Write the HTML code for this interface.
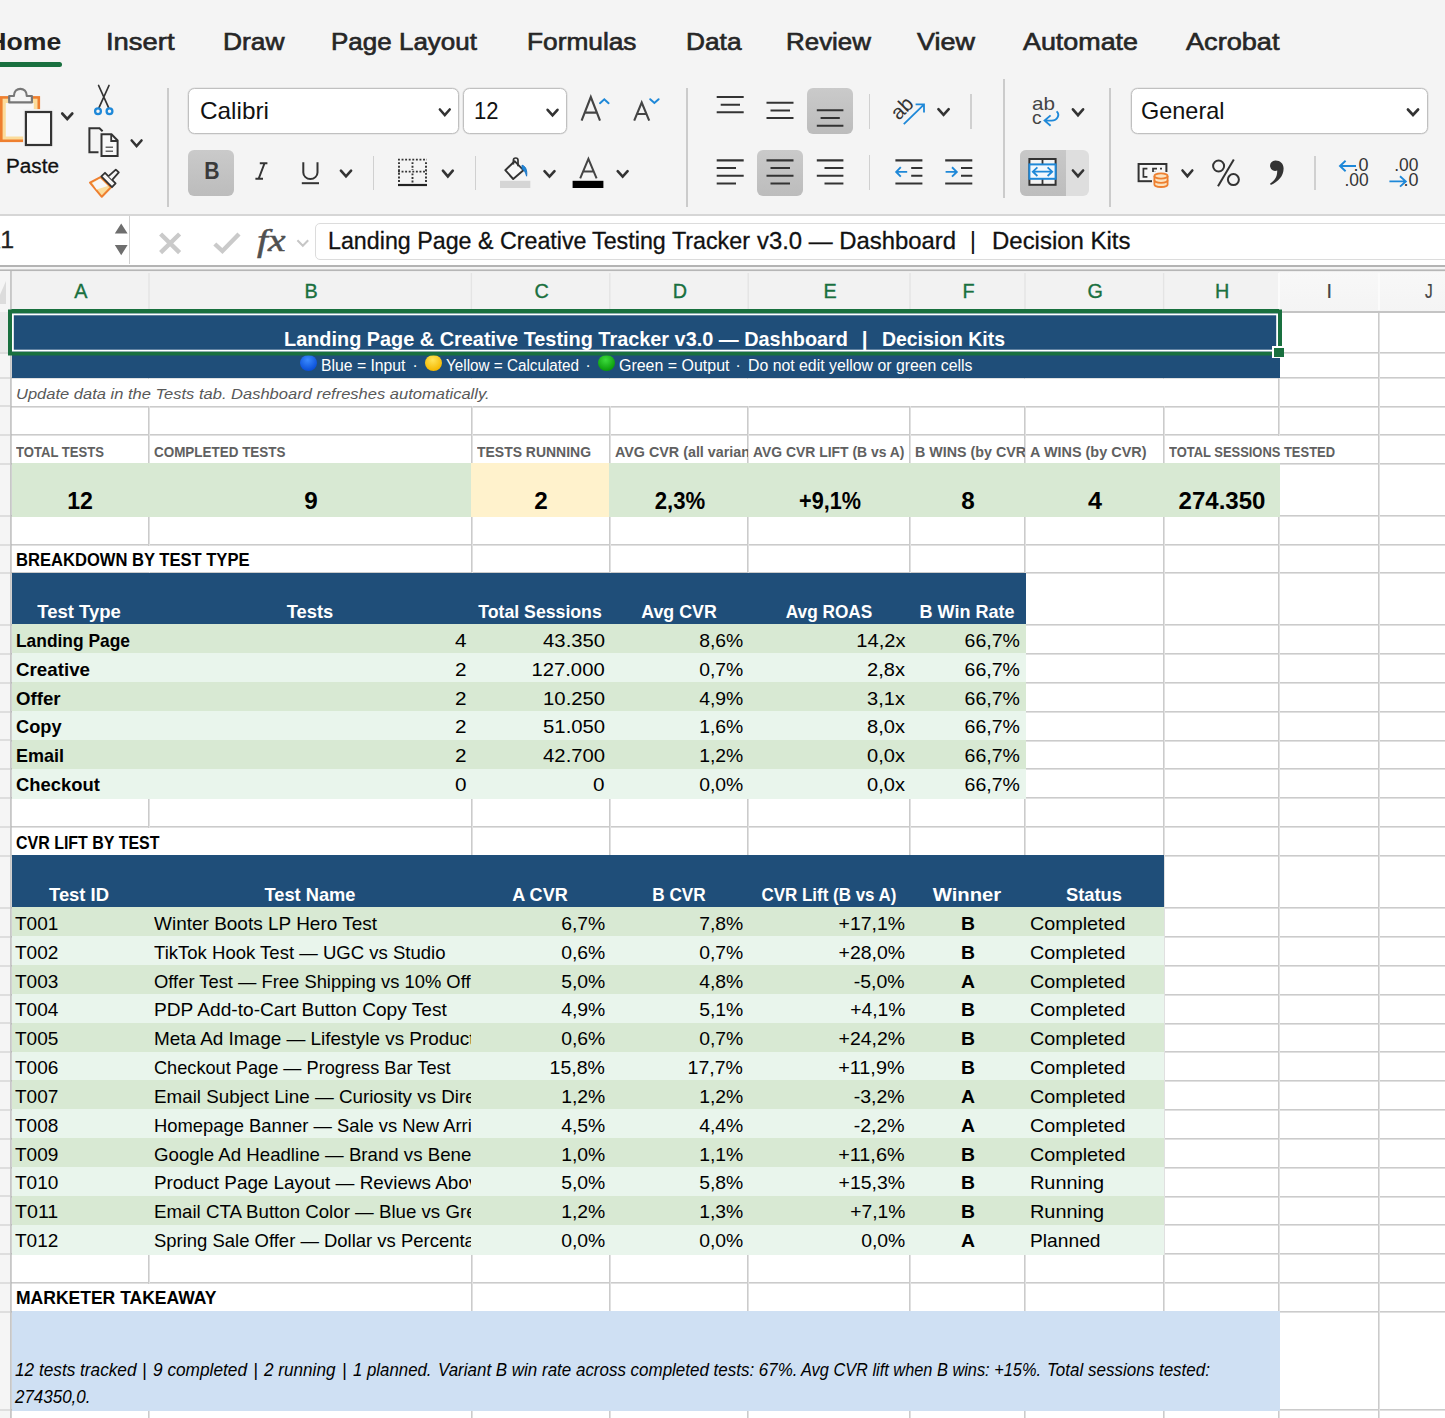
<!DOCTYPE html>
<html><head><meta charset="utf-8"><title>Excel</title><style>
html,body{margin:0;padding:0;}
body{width:1445px;height:1418px;overflow:hidden;background:#f4f4f4;position:relative;
font-family:"Liberation Sans",sans-serif;}
#root{position:absolute;left:0;top:0;width:1445px;height:1418px;overflow:hidden;}
#root div,#root svg{position:absolute;}
.t{position:absolute;white-space:pre;line-height:1;display:block;}
</style></head>
<body><div id="root">
<div id="sheet" style="left:0;top:271px;width:1445px;height:1147px;background:#fff"></div>
<div style="left:10.50px;top:352.00px;width:1434.50px;height:2.00px;background:linear-gradient(#cbcbcb 50%,#e0e0e0 50%);"></div>
<div style="left:10.50px;top:377.00px;width:1434.50px;height:2.00px;background:linear-gradient(#cbcbcb 50%,#e0e0e0 50%);"></div>
<div style="left:10.50px;top:406.00px;width:1434.50px;height:2.00px;background:linear-gradient(#cbcbcb 50%,#e0e0e0 50%);"></div>
<div style="left:10.50px;top:434.00px;width:1434.50px;height:2.00px;background:linear-gradient(#cbcbcb 50%,#e0e0e0 50%);"></div>
<div style="left:10.50px;top:463.00px;width:1434.50px;height:2.00px;background:linear-gradient(#cbcbcb 50%,#e0e0e0 50%);"></div>
<div style="left:10.50px;top:515.00px;width:1434.50px;height:2.00px;background:linear-gradient(#cbcbcb 50%,#e0e0e0 50%);"></div>
<div style="left:10.50px;top:544.00px;width:1434.50px;height:2.00px;background:linear-gradient(#cbcbcb 50%,#e0e0e0 50%);"></div>
<div style="left:10.50px;top:572.00px;width:1434.50px;height:2.00px;background:linear-gradient(#cbcbcb 50%,#e0e0e0 50%);"></div>
<div style="left:10.50px;top:624.00px;width:1434.50px;height:2.00px;background:linear-gradient(#cbcbcb 50%,#e0e0e0 50%);"></div>
<div style="left:10.50px;top:653.00px;width:1434.50px;height:2.00px;background:linear-gradient(#cbcbcb 50%,#e0e0e0 50%);"></div>
<div style="left:10.50px;top:682.00px;width:1434.50px;height:2.00px;background:linear-gradient(#cbcbcb 50%,#e0e0e0 50%);"></div>
<div style="left:10.50px;top:711.00px;width:1434.50px;height:2.00px;background:linear-gradient(#cbcbcb 50%,#e0e0e0 50%);"></div>
<div style="left:10.50px;top:740.00px;width:1434.50px;height:2.00px;background:linear-gradient(#cbcbcb 50%,#e0e0e0 50%);"></div>
<div style="left:10.50px;top:768.00px;width:1434.50px;height:2.00px;background:linear-gradient(#cbcbcb 50%,#e0e0e0 50%);"></div>
<div style="left:10.50px;top:797.00px;width:1434.50px;height:2.00px;background:linear-gradient(#cbcbcb 50%,#e0e0e0 50%);"></div>
<div style="left:10.50px;top:826.00px;width:1434.50px;height:2.00px;background:linear-gradient(#cbcbcb 50%,#e0e0e0 50%);"></div>
<div style="left:10.50px;top:855.00px;width:1434.50px;height:2.00px;background:linear-gradient(#cbcbcb 50%,#e0e0e0 50%);"></div>
<div style="left:10.50px;top:907.00px;width:1434.50px;height:2.00px;background:linear-gradient(#cbcbcb 50%,#e0e0e0 50%);"></div>
<div style="left:10.50px;top:936.00px;width:1434.50px;height:2.00px;background:linear-gradient(#cbcbcb 50%,#e0e0e0 50%);"></div>
<div style="left:10.50px;top:965.00px;width:1434.50px;height:2.00px;background:linear-gradient(#cbcbcb 50%,#e0e0e0 50%);"></div>
<div style="left:10.50px;top:994.00px;width:1434.50px;height:2.00px;background:linear-gradient(#cbcbcb 50%,#e0e0e0 50%);"></div>
<div style="left:10.50px;top:1023.00px;width:1434.50px;height:2.00px;background:linear-gradient(#cbcbcb 50%,#e0e0e0 50%);"></div>
<div style="left:10.50px;top:1051.00px;width:1434.50px;height:2.00px;background:linear-gradient(#cbcbcb 50%,#e0e0e0 50%);"></div>
<div style="left:10.50px;top:1080.00px;width:1434.50px;height:2.00px;background:linear-gradient(#cbcbcb 50%,#e0e0e0 50%);"></div>
<div style="left:10.50px;top:1109.00px;width:1434.50px;height:2.00px;background:linear-gradient(#cbcbcb 50%,#e0e0e0 50%);"></div>
<div style="left:10.50px;top:1138.00px;width:1434.50px;height:2.00px;background:linear-gradient(#cbcbcb 50%,#e0e0e0 50%);"></div>
<div style="left:10.50px;top:1167.00px;width:1434.50px;height:2.00px;background:linear-gradient(#cbcbcb 50%,#e0e0e0 50%);"></div>
<div style="left:10.50px;top:1196.00px;width:1434.50px;height:2.00px;background:linear-gradient(#cbcbcb 50%,#e0e0e0 50%);"></div>
<div style="left:10.50px;top:1224.00px;width:1434.50px;height:2.00px;background:linear-gradient(#cbcbcb 50%,#e0e0e0 50%);"></div>
<div style="left:10.50px;top:1253.00px;width:1434.50px;height:2.00px;background:linear-gradient(#cbcbcb 50%,#e0e0e0 50%);"></div>
<div style="left:10.50px;top:1282.00px;width:1434.50px;height:2.00px;background:linear-gradient(#cbcbcb 50%,#e0e0e0 50%);"></div>
<div style="left:10.50px;top:1311.00px;width:1434.50px;height:2.00px;background:linear-gradient(#cbcbcb 50%,#e0e0e0 50%);"></div>
<div style="left:10.50px;top:1409.00px;width:1434.50px;height:2.00px;background:linear-gradient(#cbcbcb 50%,#e0e0e0 50%);"></div>
<div style="left:10.50px;top:1439.00px;width:1434.50px;height:2.00px;background:linear-gradient(#cbcbcb 50%,#e0e0e0 50%);"></div>
<div style="left:148.00px;top:311.50px;width:2.00px;height:1106.50px;background:linear-gradient(90deg,#cbcbcb 50%,#e0e0e0 50%);"></div>
<div style="left:471.00px;top:311.50px;width:2.00px;height:1106.50px;background:linear-gradient(90deg,#cbcbcb 50%,#e0e0e0 50%);"></div>
<div style="left:609.00px;top:311.50px;width:2.00px;height:1106.50px;background:linear-gradient(90deg,#cbcbcb 50%,#e0e0e0 50%);"></div>
<div style="left:747.00px;top:311.50px;width:2.00px;height:1106.50px;background:linear-gradient(90deg,#cbcbcb 50%,#e0e0e0 50%);"></div>
<div style="left:909.00px;top:311.50px;width:2.00px;height:1106.50px;background:linear-gradient(90deg,#cbcbcb 50%,#e0e0e0 50%);"></div>
<div style="left:1024.00px;top:311.50px;width:2.00px;height:1106.50px;background:linear-gradient(90deg,#cbcbcb 50%,#e0e0e0 50%);"></div>
<div style="left:1163.00px;top:311.50px;width:2.00px;height:1106.50px;background:linear-gradient(90deg,#cbcbcb 50%,#e0e0e0 50%);"></div>
<div style="left:1278.00px;top:311.50px;width:2.00px;height:1106.50px;background:linear-gradient(90deg,#cbcbcb 50%,#e0e0e0 50%);"></div>
<div style="left:1378.00px;top:311.50px;width:2.00px;height:1106.50px;background:linear-gradient(90deg,#cbcbcb 50%,#e0e0e0 50%);"></div>
<div style="left:12.00px;top:379.00px;width:1266.00px;height:27.00px;background:#fff;"></div>
<div style="left:12.00px;top:546.00px;width:459.00px;height:26.00px;background:#fff;"></div>
<div style="left:12.00px;top:828.00px;width:459.00px;height:27.00px;background:#fff;"></div>
<div style="left:12.00px;top:1284.00px;width:459.00px;height:27.00px;background:#fff;"></div>
<div style="left:1165.00px;top:436.00px;width:213.00px;height:27.00px;background:#fff;"></div>
<div style="left:11.60px;top:310.80px;width:1268.40px;height:66.90px;background:#1f4e79;"></div>
<div style="left:11.60px;top:462.80px;width:459.00px;height:53.90px;background:#d8e9d3;"></div>
<div style="left:470.60px;top:462.80px;width:138.80px;height:53.90px;background:#fff2cc;"></div>
<div style="left:609.40px;top:462.80px;width:670.60px;height:53.90px;background:#d8e9d3;"></div>
<div style="left:11.60px;top:572.60px;width:1014.40px;height:53.10px;background:#1f4e79;"></div>
<div style="left:11.60px;top:624.30px;width:1014.40px;height:30.25px;background:#d8e9d3;"></div>
<div style="left:11.60px;top:653.15px;width:1014.40px;height:30.25px;background:#e9f5ec;"></div>
<div style="left:11.60px;top:682.00px;width:1014.40px;height:30.25px;background:#d8e9d3;"></div>
<div style="left:11.60px;top:710.85px;width:1014.40px;height:30.25px;background:#e9f5ec;"></div>
<div style="left:11.60px;top:739.70px;width:1014.40px;height:30.25px;background:#d8e9d3;"></div>
<div style="left:11.60px;top:768.55px;width:1014.40px;height:30.25px;background:#e9f5ec;"></div>
<div style="left:11.60px;top:855.30px;width:1152.80px;height:53.40px;background:#1f4e79;"></div>
<div style="left:11.60px;top:907.30px;width:1152.80px;height:30.24px;background:#d8e9d3;"></div>
<div style="left:11.60px;top:936.14px;width:1152.80px;height:30.24px;background:#e9f5ec;"></div>
<div style="left:11.60px;top:964.98px;width:1152.80px;height:30.24px;background:#d8e9d3;"></div>
<div style="left:11.60px;top:993.82px;width:1152.80px;height:30.24px;background:#e9f5ec;"></div>
<div style="left:11.60px;top:1022.66px;width:1152.80px;height:30.24px;background:#d8e9d3;"></div>
<div style="left:11.60px;top:1051.50px;width:1152.80px;height:30.24px;background:#e9f5ec;"></div>
<div style="left:11.60px;top:1080.34px;width:1152.80px;height:30.24px;background:#d8e9d3;"></div>
<div style="left:11.60px;top:1109.18px;width:1152.80px;height:30.24px;background:#e9f5ec;"></div>
<div style="left:11.60px;top:1138.02px;width:1152.80px;height:30.24px;background:#d8e9d3;"></div>
<div style="left:11.60px;top:1166.86px;width:1152.80px;height:30.24px;background:#e9f5ec;"></div>
<div style="left:11.60px;top:1195.70px;width:1152.80px;height:30.24px;background:#d8e9d3;"></div>
<div style="left:11.60px;top:1224.54px;width:1152.80px;height:30.24px;background:#e9f5ec;"></div>
<div style="left:11.60px;top:1310.90px;width:1268.40px;height:99.80px;background:#cfe0f3;"></div>
<span class="t" id="t1" style="top:328.69px;font-size:20.8px;color:#fff;font-weight:bold;left:283.80px;transform-origin:0 0;transform:scaleX(0.9556);">Landing Page &amp; Creative Testing Tracker v3.0 — Dashboard</span>
<span class="t" style="top:328.69px;font-size:20.8px;color:#fff;font-weight:bold;left:-135.40px;width:2000px;text-align:center;transform-origin:50% 0;"><span id="t2">|</span></span>
<span class="t" id="t3" style="top:328.69px;font-size:20.8px;color:#fff;font-weight:bold;left:882.20px;transform-origin:0 0;transform:scaleX(0.9336);">Decision Kits</span>
<div style="left:300px;top:354.8px;width:17px;height:15.8px;border-radius:50%;background:radial-gradient(circle at 45% 30%,#3b8bff,#0a4fd8 75%);"></div>
<div style="left:424.8px;top:354.8px;width:17px;height:15.8px;border-radius:50%;background:radial-gradient(circle at 45% 30%,#ffe55a,#f5b800 75%);"></div>
<div style="left:597.8px;top:354.8px;width:17px;height:15.8px;border-radius:50%;background:radial-gradient(circle at 45% 30%,#3ddc3d,#0a9a0a 75%);"></div>
<span class="t" id="t4" style="top:357.79px;font-size:15.6px;color:#fff;left:321.00px;transform-origin:0 0;transform:scaleX(1.0099);">Blue = Input</span>
<span class="t" id="t5" style="top:357.79px;font-size:15.6px;color:#fff;left:412.50px;transform-origin:0 0;">·</span>
<span class="t" id="t6" style="top:357.79px;font-size:15.6px;color:#fff;left:446.00px;transform-origin:0 0;transform:scaleX(0.9782);">Yellow = Calculated</span>
<span class="t" id="t7" style="top:357.79px;font-size:15.6px;color:#fff;left:585.50px;transform-origin:0 0;">·</span>
<span class="t" id="t8" style="top:357.79px;font-size:15.6px;color:#fff;left:619.00px;transform-origin:0 0;transform:scaleX(1.0237);">Green = Output</span>
<span class="t" id="t9" style="top:357.79px;font-size:15.6px;color:#fff;left:735.50px;transform-origin:0 0;">·</span>
<span class="t" id="t10" style="top:357.79px;font-size:15.6px;color:#fff;left:748.00px;transform-origin:0 0;transform:scaleX(1.0157);">Do not edit yellow or green cells</span>
<span class="t" id="t11" style="top:387.16px;font-size:14.7px;color:#595959;font-style:italic;left:15.50px;transform-origin:0 0;transform:scaleX(1.1240);">Update data in the Tests tab. Dashboard refreshes automatically.</span>
<span class="t" id="t12" style="top:444.76px;font-size:14.7px;color:#606060;font-weight:bold;left:15.70px;transform-origin:0 0;transform:scaleX(0.8911);">TOTAL TESTS</span>
<span class="t" id="t13" style="top:444.76px;font-size:14.7px;color:#606060;font-weight:bold;left:154.30px;transform-origin:0 0;transform:scaleX(0.9156);">COMPLETED TESTS</span>
<span class="t" id="t14" style="top:444.76px;font-size:14.7px;color:#606060;font-weight:bold;left:476.50px;transform-origin:0 0;transform:scaleX(0.9504);">TESTS RUNNING</span>
<div style="left:609.80px;top:0;width:137.90px;height:1418px;overflow:hidden;background:none"><div style="left:-609.80px;top:0;width:1445px;height:1418px;background:none"><span class="t" id="t15" style="top:444.76px;font-size:14.7px;color:#606060;font-weight:bold;left:615.00px;transform-origin:0 0;transform:scaleX(0.9748);">AVG CVR (all variants)</span></div></div>
<span class="t" id="t16" style="top:444.76px;font-size:14.7px;color:#606060;font-weight:bold;left:753.00px;transform-origin:0 0;transform:scaleX(0.9472);">AVG CVR LIFT (B vs A)</span>
<div style="left:910.00px;top:0;width:114.50px;height:1418px;overflow:hidden;background:none"><div style="left:-910.00px;top:0;width:1445px;height:1418px;background:none"><span class="t" id="t17" style="top:444.76px;font-size:14.7px;color:#606060;font-weight:bold;left:915.00px;transform-origin:0 0;transform:scaleX(0.9720);">B WINS (by CVR)</span></div></div>
<span class="t" id="t18" style="top:444.76px;font-size:14.7px;color:#606060;font-weight:bold;left:1030.30px;transform-origin:0 0;transform:scaleX(0.9823);">A WINS (by CVR)</span>
<span class="t" id="t19" style="top:444.76px;font-size:14.7px;color:#606060;font-weight:bold;left:1168.50px;transform-origin:0 0;transform:scaleX(0.8805);">TOTAL SESSIONS TESTED</span>
<span class="t" style="top:489.66px;font-size:23.2px;color:#000;font-weight:bold;left:-919.75px;width:2000px;text-align:center;transform-origin:50% 0;transform:scaleX(0.9962);"><span id="t20">12</span></span>
<span class="t" style="top:489.66px;font-size:23.2px;color:#000;font-weight:bold;left:-689.30px;width:2000px;text-align:center;transform-origin:50% 0;transform:scaleX(1.0460);"><span id="t21">9</span></span>
<span class="t" style="top:489.66px;font-size:23.2px;color:#000;font-weight:bold;left:-458.90px;width:2000px;text-align:center;transform-origin:50% 0;transform:scaleX(1.0460);"><span id="t22">2</span></span>
<span class="t" style="top:489.66px;font-size:23.2px;color:#000;font-weight:bold;left:-320.50px;width:2000px;text-align:center;transform-origin:50% 0;transform:scaleX(0.9554);"><span id="t23">2,3%</span></span>
<span class="t" style="top:489.66px;font-size:23.2px;color:#000;font-weight:bold;left:-170.40px;width:2000px;text-align:center;transform-origin:50% 0;transform:scaleX(0.9336);"><span id="t24">+9,1%</span></span>
<span class="t" style="top:489.66px;font-size:23.2px;color:#000;font-weight:bold;left:-32.00px;width:2000px;text-align:center;transform-origin:50% 0;transform:scaleX(1.0460);"><span id="t25">8</span></span>
<span class="t" style="top:489.66px;font-size:23.2px;color:#000;font-weight:bold;left:94.80px;width:2000px;text-align:center;transform-origin:50% 0;transform:scaleX(1.0847);"><span id="t26">4</span></span>
<span class="t" style="top:489.66px;font-size:23.2px;color:#000;font-weight:bold;left:221.70px;width:2000px;text-align:center;transform-origin:50% 0;transform:scaleX(1.0378);"><span id="t27">274.350</span></span>
<span class="t" id="t28" style="top:550.22px;font-size:19.0px;color:#000;font-weight:bold;left:15.70px;transform-origin:0 0;transform:scaleX(0.8720);">BREAKDOWN BY TEST TYPE</span>
<span class="t" style="top:601.92px;font-size:19.0px;color:#fff;font-weight:bold;left:-920.75px;width:2000px;text-align:center;transform-origin:50% 0;transform:scaleX(0.9723);"><span id="t29">Test Type</span></span>
<span class="t" style="top:601.92px;font-size:19.0px;color:#fff;font-weight:bold;left:-690.30px;width:2000px;text-align:center;transform-origin:50% 0;transform:scaleX(0.9640);"><span id="t30">Tests</span></span>
<span class="t" style="top:601.92px;font-size:19.0px;color:#fff;font-weight:bold;left:-459.90px;width:2000px;text-align:center;transform-origin:50% 0;transform:scaleX(0.9308);"><span id="t31">Total Sessions</span></span>
<span class="t" style="top:601.92px;font-size:19.0px;color:#fff;font-weight:bold;left:-321.50px;width:2000px;text-align:center;transform-origin:50% 0;transform:scaleX(0.9368);"><span id="t32">Avg CVR</span></span>
<span class="t" style="top:601.92px;font-size:19.0px;color:#fff;font-weight:bold;left:-171.40px;width:2000px;text-align:center;transform-origin:50% 0;transform:scaleX(0.9069);"><span id="t33">Avg ROAS</span></span>
<span class="t" style="top:601.92px;font-size:19.0px;color:#fff;font-weight:bold;left:-33.00px;width:2000px;text-align:center;transform-origin:50% 0;transform:scaleX(0.9488);"><span id="t34">B Win Rate</span></span>
<span class="t" id="t35" style="top:630.87px;font-size:19.0px;color:#000;font-weight:bold;left:15.50px;transform-origin:0 0;transform:scaleX(0.9151);">Landing Page</span>
<span class="t" id="t36" style="top:630.87px;font-size:19.0px;color:#000;right:978.60px;transform-origin:100% 0;transform:scaleX(1.0899);">4</span>
<span class="t" id="t37" style="top:630.87px;font-size:19.0px;color:#000;right:840.20px;transform-origin:100% 0;transform:scaleX(1.0673);">43.350</span>
<span class="t" id="t38" style="top:630.87px;font-size:19.0px;color:#000;right:701.80px;transform-origin:100% 0;transform:scaleX(1.0187);">8,6%</span>
<span class="t" id="t39" style="top:630.87px;font-size:19.0px;color:#000;right:540.00px;transform-origin:100% 0;transform:scaleX(1.0565);">14,2x</span>
<span class="t" id="t40" style="top:630.87px;font-size:19.0px;color:#000;right:425.00px;transform-origin:100% 0;transform:scaleX(1.0274);">66,7%</span>
<span class="t" id="t41" style="top:659.72px;font-size:19.0px;color:#000;font-weight:bold;left:15.50px;transform-origin:0 0;transform:scaleX(0.9867);">Creative</span>
<span class="t" id="t42" style="top:659.72px;font-size:19.0px;color:#000;right:978.60px;transform-origin:100% 0;transform:scaleX(1.0899);">2</span>
<span class="t" id="t43" style="top:659.72px;font-size:19.0px;color:#000;right:840.20px;transform-origin:100% 0;transform:scaleX(1.0667);">127.000</span>
<span class="t" id="t44" style="top:659.72px;font-size:19.0px;color:#000;right:701.80px;transform-origin:100% 0;transform:scaleX(1.0187);">0,7%</span>
<span class="t" id="t45" style="top:659.72px;font-size:19.0px;color:#000;right:540.00px;transform-origin:100% 0;transform:scaleX(1.0545);">2,8x</span>
<span class="t" id="t46" style="top:659.72px;font-size:19.0px;color:#000;right:425.00px;transform-origin:100% 0;transform:scaleX(1.0274);">66,7%</span>
<span class="t" id="t47" style="top:688.57px;font-size:19.0px;color:#000;font-weight:bold;left:15.50px;transform-origin:0 0;transform:scaleX(0.9800);">Offer</span>
<span class="t" id="t48" style="top:688.57px;font-size:19.0px;color:#000;right:978.60px;transform-origin:100% 0;transform:scaleX(1.0899);">2</span>
<span class="t" id="t49" style="top:688.57px;font-size:19.0px;color:#000;right:840.20px;transform-origin:100% 0;transform:scaleX(1.0673);">10.250</span>
<span class="t" id="t50" style="top:688.57px;font-size:19.0px;color:#000;right:701.80px;transform-origin:100% 0;transform:scaleX(1.0187);">4,9%</span>
<span class="t" id="t51" style="top:688.57px;font-size:19.0px;color:#000;right:540.00px;transform-origin:100% 0;transform:scaleX(1.0545);">3,1x</span>
<span class="t" id="t52" style="top:688.57px;font-size:19.0px;color:#000;right:425.00px;transform-origin:100% 0;transform:scaleX(1.0274);">66,7%</span>
<span class="t" id="t53" style="top:717.42px;font-size:19.0px;color:#000;font-weight:bold;left:15.50px;transform-origin:0 0;transform:scaleX(0.9579);">Copy</span>
<span class="t" id="t54" style="top:717.42px;font-size:19.0px;color:#000;right:978.60px;transform-origin:100% 0;transform:scaleX(1.0899);">2</span>
<span class="t" id="t55" style="top:717.42px;font-size:19.0px;color:#000;right:840.20px;transform-origin:100% 0;transform:scaleX(1.0673);">51.050</span>
<span class="t" id="t56" style="top:717.42px;font-size:19.0px;color:#000;right:701.80px;transform-origin:100% 0;transform:scaleX(1.0187);">1,6%</span>
<span class="t" id="t57" style="top:717.42px;font-size:19.0px;color:#000;right:540.00px;transform-origin:100% 0;transform:scaleX(1.0545);">8,0x</span>
<span class="t" id="t58" style="top:717.42px;font-size:19.0px;color:#000;right:425.00px;transform-origin:100% 0;transform:scaleX(1.0274);">66,7%</span>
<span class="t" id="t59" style="top:746.27px;font-size:19.0px;color:#000;font-weight:bold;left:15.50px;transform-origin:0 0;transform:scaleX(0.9467);">Email</span>
<span class="t" id="t60" style="top:746.27px;font-size:19.0px;color:#000;right:978.60px;transform-origin:100% 0;transform:scaleX(1.0899);">2</span>
<span class="t" id="t61" style="top:746.27px;font-size:19.0px;color:#000;right:840.20px;transform-origin:100% 0;transform:scaleX(1.0673);">42.700</span>
<span class="t" id="t62" style="top:746.27px;font-size:19.0px;color:#000;right:701.80px;transform-origin:100% 0;transform:scaleX(1.0187);">1,2%</span>
<span class="t" id="t63" style="top:746.27px;font-size:19.0px;color:#000;right:540.00px;transform-origin:100% 0;transform:scaleX(1.0545);">0,0x</span>
<span class="t" id="t64" style="top:746.27px;font-size:19.0px;color:#000;right:425.00px;transform-origin:100% 0;transform:scaleX(1.0274);">66,7%</span>
<span class="t" id="t65" style="top:775.12px;font-size:19.0px;color:#000;font-weight:bold;left:15.50px;transform-origin:0 0;transform:scaleX(0.9702);">Checkout</span>
<span class="t" id="t66" style="top:775.12px;font-size:19.0px;color:#000;right:978.60px;transform-origin:100% 0;transform:scaleX(1.0899);">0</span>
<span class="t" id="t67" style="top:775.12px;font-size:19.0px;color:#000;right:840.20px;transform-origin:100% 0;transform:scaleX(1.0899);">0</span>
<span class="t" id="t68" style="top:775.12px;font-size:19.0px;color:#000;right:701.80px;transform-origin:100% 0;transform:scaleX(1.0187);">0,0%</span>
<span class="t" id="t69" style="top:775.12px;font-size:19.0px;color:#000;right:540.00px;transform-origin:100% 0;transform:scaleX(1.0545);">0,0x</span>
<span class="t" id="t70" style="top:775.12px;font-size:19.0px;color:#000;right:425.00px;transform-origin:100% 0;transform:scaleX(1.0274);">66,7%</span>
<span class="t" id="t71" style="top:832.92px;font-size:19.0px;color:#000;font-weight:bold;left:15.70px;transform-origin:0 0;transform:scaleX(0.8408);">CVR LIFT BY TEST</span>
<span class="t" style="top:884.52px;font-size:19.0px;color:#fff;font-weight:bold;left:-920.75px;width:2000px;text-align:center;transform-origin:50% 0;transform:scaleX(0.9687);"><span id="t72">Test ID</span></span>
<span class="t" style="top:884.52px;font-size:19.0px;color:#fff;font-weight:bold;left:-690.30px;width:2000px;text-align:center;transform-origin:50% 0;transform:scaleX(0.9611);"><span id="t73">Test Name</span></span>
<span class="t" style="top:884.52px;font-size:19.0px;color:#fff;font-weight:bold;left:-459.90px;width:2000px;text-align:center;transform-origin:50% 0;transform:scaleX(0.9500);"><span id="t74">A CVR</span></span>
<span class="t" style="top:884.52px;font-size:19.0px;color:#fff;font-weight:bold;left:-321.50px;width:2000px;text-align:center;transform-origin:50% 0;transform:scaleX(0.9049);"><span id="t75">B CVR</span></span>
<span class="t" style="top:884.52px;font-size:19.0px;color:#fff;font-weight:bold;left:-171.40px;width:2000px;text-align:center;transform-origin:50% 0;transform:scaleX(0.8923);"><span id="t76">CVR Lift (B vs A)</span></span>
<span class="t" style="top:884.52px;font-size:19.0px;color:#fff;font-weight:bold;left:-33.00px;width:2000px;text-align:center;transform-origin:50% 0;transform:scaleX(1.0667);"><span id="t77">Winner</span></span>
<span class="t" style="top:884.52px;font-size:19.0px;color:#fff;font-weight:bold;left:93.80px;width:2000px;text-align:center;transform-origin:50% 0;transform:scaleX(0.9642);"><span id="t78">Status</span></span>
<span class="t" id="t79" style="top:913.86px;font-size:19.0px;color:#000;left:15.00px;transform-origin:0 0;transform:scaleX(0.9997);">T001</span>
<div style="left:149.00px;top:0;width:321.90px;height:1418px;overflow:hidden;background:none"><div style="left:-149.00px;top:0;width:1445px;height:1418px;background:none"><span class="t" id="t80" style="top:913.86px;font-size:19.0px;color:#000;left:154.00px;transform-origin:0 0;transform:scaleX(0.9994);">Winter Boots LP Hero Test</span></div></div>
<span class="t" id="t81" style="top:913.86px;font-size:19.0px;color:#000;right:840.20px;transform-origin:100% 0;transform:scaleX(1.0187);">6,7%</span>
<span class="t" id="t82" style="top:913.86px;font-size:19.0px;color:#000;right:701.80px;transform-origin:100% 0;transform:scaleX(1.0187);">7,8%</span>
<span class="t" id="t83" style="top:913.86px;font-size:19.0px;color:#000;right:540.00px;transform-origin:100% 0;transform:scaleX(1.0216);">+17,1%</span>
<span class="t" style="top:913.86px;font-size:19.0px;color:#000;font-weight:bold;left:-32.50px;width:2000px;text-align:center;transform-origin:50% 0;transform:scaleX(1.0193);"><span id="t84">B</span></span>
<span class="t" id="t85" style="top:913.86px;font-size:19.0px;color:#000;left:1030.30px;transform-origin:0 0;transform:scaleX(1.0393);">Completed</span>
<span class="t" id="t86" style="top:942.70px;font-size:19.0px;color:#000;left:15.00px;transform-origin:0 0;transform:scaleX(0.9997);">T002</span>
<div style="left:149.00px;top:0;width:321.90px;height:1418px;overflow:hidden;background:none"><div style="left:-149.00px;top:0;width:1445px;height:1418px;background:none"><span class="t" id="t87" style="top:942.70px;font-size:19.0px;color:#000;left:154.00px;transform-origin:0 0;transform:scaleX(0.9756);">TikTok Hook Test — UGC vs Studio</span></div></div>
<span class="t" id="t88" style="top:942.70px;font-size:19.0px;color:#000;right:840.20px;transform-origin:100% 0;transform:scaleX(1.0187);">0,6%</span>
<span class="t" id="t89" style="top:942.70px;font-size:19.0px;color:#000;right:701.80px;transform-origin:100% 0;transform:scaleX(1.0187);">0,7%</span>
<span class="t" id="t90" style="top:942.70px;font-size:19.0px;color:#000;right:540.00px;transform-origin:100% 0;transform:scaleX(1.0216);">+28,0%</span>
<span class="t" style="top:942.70px;font-size:19.0px;color:#000;font-weight:bold;left:-32.50px;width:2000px;text-align:center;transform-origin:50% 0;transform:scaleX(1.0193);"><span id="t91">B</span></span>
<span class="t" id="t92" style="top:942.70px;font-size:19.0px;color:#000;left:1030.30px;transform-origin:0 0;transform:scaleX(1.0393);">Completed</span>
<span class="t" id="t93" style="top:971.54px;font-size:19.0px;color:#000;left:15.00px;transform-origin:0 0;transform:scaleX(0.9997);">T003</span>
<div style="left:149.00px;top:0;width:321.90px;height:1418px;overflow:hidden;background:none"><div style="left:-149.00px;top:0;width:1445px;height:1418px;background:none"><span class="t" id="t94" style="top:971.54px;font-size:19.0px;color:#000;left:154.00px;transform-origin:0 0;transform:scaleX(0.9668);">Offer Test — Free Shipping vs 10% Off</span></div></div>
<span class="t" id="t95" style="top:971.54px;font-size:19.0px;color:#000;right:840.20px;transform-origin:100% 0;transform:scaleX(1.0187);">5,0%</span>
<span class="t" id="t96" style="top:971.54px;font-size:19.0px;color:#000;right:701.80px;transform-origin:100% 0;transform:scaleX(1.0187);">4,8%</span>
<span class="t" id="t97" style="top:971.54px;font-size:19.0px;color:#000;right:540.00px;transform-origin:100% 0;transform:scaleX(1.0255);">-5,0%</span>
<span class="t" style="top:971.54px;font-size:19.0px;color:#000;font-weight:bold;left:-32.50px;width:2000px;text-align:center;transform-origin:50% 0;transform:scaleX(1.0193);"><span id="t98">A</span></span>
<span class="t" id="t99" style="top:971.54px;font-size:19.0px;color:#000;left:1030.30px;transform-origin:0 0;transform:scaleX(1.0393);">Completed</span>
<span class="t" id="t100" style="top:1000.38px;font-size:19.0px;color:#000;left:15.00px;transform-origin:0 0;transform:scaleX(0.9997);">T004</span>
<div style="left:149.00px;top:0;width:321.90px;height:1418px;overflow:hidden;background:none"><div style="left:-149.00px;top:0;width:1445px;height:1418px;background:none"><span class="t" id="t101" style="top:1000.38px;font-size:19.0px;color:#000;left:154.00px;transform-origin:0 0;transform:scaleX(1.0073);">PDP Add-to-Cart Button Copy Test</span></div></div>
<span class="t" id="t102" style="top:1000.38px;font-size:19.0px;color:#000;right:840.20px;transform-origin:100% 0;transform:scaleX(1.0187);">4,9%</span>
<span class="t" id="t103" style="top:1000.38px;font-size:19.0px;color:#000;right:701.80px;transform-origin:100% 0;transform:scaleX(1.0187);">5,1%</span>
<span class="t" id="t104" style="top:1000.38px;font-size:19.0px;color:#000;right:540.00px;transform-origin:100% 0;transform:scaleX(1.0138);">+4,1%</span>
<span class="t" style="top:1000.38px;font-size:19.0px;color:#000;font-weight:bold;left:-32.50px;width:2000px;text-align:center;transform-origin:50% 0;transform:scaleX(1.0193);"><span id="t105">B</span></span>
<span class="t" id="t106" style="top:1000.38px;font-size:19.0px;color:#000;left:1030.30px;transform-origin:0 0;transform:scaleX(1.0393);">Completed</span>
<span class="t" id="t107" style="top:1029.22px;font-size:19.0px;color:#000;left:15.00px;transform-origin:0 0;transform:scaleX(0.9997);">T005</span>
<div style="left:149.00px;top:0;width:321.90px;height:1418px;overflow:hidden;background:none"><div style="left:-149.00px;top:0;width:1445px;height:1418px;background:none"><span class="t" id="t108" style="top:1029.22px;font-size:19.0px;color:#000;left:154.00px;transform-origin:0 0;transform:scaleX(0.9951);">Meta Ad Image — Lifestyle vs Product</span></div></div>
<span class="t" id="t109" style="top:1029.22px;font-size:19.0px;color:#000;right:840.20px;transform-origin:100% 0;transform:scaleX(1.0187);">0,6%</span>
<span class="t" id="t110" style="top:1029.22px;font-size:19.0px;color:#000;right:701.80px;transform-origin:100% 0;transform:scaleX(1.0187);">0,7%</span>
<span class="t" id="t111" style="top:1029.22px;font-size:19.0px;color:#000;right:540.00px;transform-origin:100% 0;transform:scaleX(1.0216);">+24,2%</span>
<span class="t" style="top:1029.22px;font-size:19.0px;color:#000;font-weight:bold;left:-32.50px;width:2000px;text-align:center;transform-origin:50% 0;transform:scaleX(1.0193);"><span id="t112">B</span></span>
<span class="t" id="t113" style="top:1029.22px;font-size:19.0px;color:#000;left:1030.30px;transform-origin:0 0;transform:scaleX(1.0393);">Completed</span>
<span class="t" id="t114" style="top:1058.06px;font-size:19.0px;color:#000;left:15.00px;transform-origin:0 0;transform:scaleX(0.9997);">T006</span>
<div style="left:149.00px;top:0;width:321.90px;height:1418px;overflow:hidden;background:none"><div style="left:-149.00px;top:0;width:1445px;height:1418px;background:none"><span class="t" id="t115" style="top:1058.06px;font-size:19.0px;color:#000;left:154.00px;transform-origin:0 0;transform:scaleX(0.9565);">Checkout Page — Progress Bar Test</span></div></div>
<span class="t" id="t116" style="top:1058.06px;font-size:19.0px;color:#000;right:840.20px;transform-origin:100% 0;transform:scaleX(1.0274);">15,8%</span>
<span class="t" id="t117" style="top:1058.06px;font-size:19.0px;color:#000;right:701.80px;transform-origin:100% 0;transform:scaleX(1.0274);">17,7%</span>
<span class="t" id="t118" style="top:1058.06px;font-size:19.0px;color:#000;right:540.00px;transform-origin:100% 0;transform:scaleX(1.0444);">+11,9%</span>
<span class="t" style="top:1058.06px;font-size:19.0px;color:#000;font-weight:bold;left:-32.50px;width:2000px;text-align:center;transform-origin:50% 0;transform:scaleX(1.0193);"><span id="t119">B</span></span>
<span class="t" id="t120" style="top:1058.06px;font-size:19.0px;color:#000;left:1030.30px;transform-origin:0 0;transform:scaleX(1.0393);">Completed</span>
<span class="t" id="t121" style="top:1086.90px;font-size:19.0px;color:#000;left:15.00px;transform-origin:0 0;transform:scaleX(0.9997);">T007</span>
<div style="left:149.00px;top:0;width:321.90px;height:1418px;overflow:hidden;background:none"><div style="left:-149.00px;top:0;width:1445px;height:1418px;background:none"><span class="t" id="t122" style="top:1086.90px;font-size:19.0px;color:#000;left:154.00px;transform-origin:0 0;transform:scaleX(0.9892);">Email Subject Line — Curiosity vs Direct</span></div></div>
<span class="t" id="t123" style="top:1086.90px;font-size:19.0px;color:#000;right:840.20px;transform-origin:100% 0;transform:scaleX(1.0187);">1,2%</span>
<span class="t" id="t124" style="top:1086.90px;font-size:19.0px;color:#000;right:701.80px;transform-origin:100% 0;transform:scaleX(1.0187);">1,2%</span>
<span class="t" id="t125" style="top:1086.90px;font-size:19.0px;color:#000;right:540.00px;transform-origin:100% 0;transform:scaleX(1.0255);">-3,2%</span>
<span class="t" style="top:1086.90px;font-size:19.0px;color:#000;font-weight:bold;left:-32.50px;width:2000px;text-align:center;transform-origin:50% 0;transform:scaleX(1.0193);"><span id="t126">A</span></span>
<span class="t" id="t127" style="top:1086.90px;font-size:19.0px;color:#000;left:1030.30px;transform-origin:0 0;transform:scaleX(1.0393);">Completed</span>
<span class="t" id="t128" style="top:1115.74px;font-size:19.0px;color:#000;left:15.00px;transform-origin:0 0;transform:scaleX(0.9997);">T008</span>
<div style="left:149.00px;top:0;width:321.90px;height:1418px;overflow:hidden;background:none"><div style="left:-149.00px;top:0;width:1445px;height:1418px;background:none"><span class="t" id="t129" style="top:1115.74px;font-size:19.0px;color:#000;left:154.00px;transform-origin:0 0;transform:scaleX(0.9675);">Homepage Banner — Sale vs New Arrivals</span></div></div>
<span class="t" id="t130" style="top:1115.74px;font-size:19.0px;color:#000;right:840.20px;transform-origin:100% 0;transform:scaleX(1.0187);">4,5%</span>
<span class="t" id="t131" style="top:1115.74px;font-size:19.0px;color:#000;right:701.80px;transform-origin:100% 0;transform:scaleX(1.0187);">4,4%</span>
<span class="t" id="t132" style="top:1115.74px;font-size:19.0px;color:#000;right:540.00px;transform-origin:100% 0;transform:scaleX(1.0255);">-2,2%</span>
<span class="t" style="top:1115.74px;font-size:19.0px;color:#000;font-weight:bold;left:-32.50px;width:2000px;text-align:center;transform-origin:50% 0;transform:scaleX(1.0193);"><span id="t133">A</span></span>
<span class="t" id="t134" style="top:1115.74px;font-size:19.0px;color:#000;left:1030.30px;transform-origin:0 0;transform:scaleX(1.0393);">Completed</span>
<span class="t" id="t135" style="top:1144.58px;font-size:19.0px;color:#000;left:15.00px;transform-origin:0 0;transform:scaleX(0.9997);">T009</span>
<div style="left:149.00px;top:0;width:321.90px;height:1418px;overflow:hidden;background:none"><div style="left:-149.00px;top:0;width:1445px;height:1418px;background:none"><span class="t" id="t136" style="top:1144.58px;font-size:19.0px;color:#000;left:154.00px;transform-origin:0 0;transform:scaleX(0.9816);">Google Ad Headline — Brand vs Benefit</span></div></div>
<span class="t" id="t137" style="top:1144.58px;font-size:19.0px;color:#000;right:840.20px;transform-origin:100% 0;transform:scaleX(1.0187);">1,0%</span>
<span class="t" id="t138" style="top:1144.58px;font-size:19.0px;color:#000;right:701.80px;transform-origin:100% 0;transform:scaleX(1.0187);">1,1%</span>
<span class="t" id="t139" style="top:1144.58px;font-size:19.0px;color:#000;right:540.00px;transform-origin:100% 0;transform:scaleX(1.0444);">+11,6%</span>
<span class="t" style="top:1144.58px;font-size:19.0px;color:#000;font-weight:bold;left:-32.50px;width:2000px;text-align:center;transform-origin:50% 0;transform:scaleX(1.0193);"><span id="t140">B</span></span>
<span class="t" id="t141" style="top:1144.58px;font-size:19.0px;color:#000;left:1030.30px;transform-origin:0 0;transform:scaleX(1.0393);">Completed</span>
<span class="t" id="t142" style="top:1173.42px;font-size:19.0px;color:#000;left:15.00px;transform-origin:0 0;transform:scaleX(0.9997);">T010</span>
<div style="left:149.00px;top:0;width:321.90px;height:1418px;overflow:hidden;background:none"><div style="left:-149.00px;top:0;width:1445px;height:1418px;background:none"><span class="t" id="t143" style="top:1173.42px;font-size:19.0px;color:#000;left:154.00px;transform-origin:0 0;transform:scaleX(0.9934);">Product Page Layout — Reviews Above Fold</span></div></div>
<span class="t" id="t144" style="top:1173.42px;font-size:19.0px;color:#000;right:840.20px;transform-origin:100% 0;transform:scaleX(1.0187);">5,0%</span>
<span class="t" id="t145" style="top:1173.42px;font-size:19.0px;color:#000;right:701.80px;transform-origin:100% 0;transform:scaleX(1.0187);">5,8%</span>
<span class="t" id="t146" style="top:1173.42px;font-size:19.0px;color:#000;right:540.00px;transform-origin:100% 0;transform:scaleX(1.0216);">+15,3%</span>
<span class="t" style="top:1173.42px;font-size:19.0px;color:#000;font-weight:bold;left:-32.50px;width:2000px;text-align:center;transform-origin:50% 0;transform:scaleX(1.0193);"><span id="t147">B</span></span>
<span class="t" id="t148" style="top:1173.42px;font-size:19.0px;color:#000;left:1030.30px;transform-origin:0 0;transform:scaleX(1.0469);">Running</span>
<span class="t" id="t149" style="top:1202.26px;font-size:19.0px;color:#000;left:15.00px;transform-origin:0 0;transform:scaleX(1.0333);">T011</span>
<div style="left:149.00px;top:0;width:321.90px;height:1418px;overflow:hidden;background:none"><div style="left:-149.00px;top:0;width:1445px;height:1418px;background:none"><span class="t" id="t150" style="top:1202.26px;font-size:19.0px;color:#000;left:154.00px;transform-origin:0 0;transform:scaleX(0.9832);">Email CTA Button Color — Blue vs Green</span></div></div>
<span class="t" id="t151" style="top:1202.26px;font-size:19.0px;color:#000;right:840.20px;transform-origin:100% 0;transform:scaleX(1.0187);">1,2%</span>
<span class="t" id="t152" style="top:1202.26px;font-size:19.0px;color:#000;right:701.80px;transform-origin:100% 0;transform:scaleX(1.0187);">1,3%</span>
<span class="t" id="t153" style="top:1202.26px;font-size:19.0px;color:#000;right:540.00px;transform-origin:100% 0;transform:scaleX(1.0138);">+7,1%</span>
<span class="t" style="top:1202.26px;font-size:19.0px;color:#000;font-weight:bold;left:-32.50px;width:2000px;text-align:center;transform-origin:50% 0;transform:scaleX(1.0193);"><span id="t154">B</span></span>
<span class="t" id="t155" style="top:1202.26px;font-size:19.0px;color:#000;left:1030.30px;transform-origin:0 0;transform:scaleX(1.0469);">Running</span>
<span class="t" id="t156" style="top:1231.10px;font-size:19.0px;color:#000;left:15.00px;transform-origin:0 0;transform:scaleX(0.9997);">T012</span>
<div style="left:149.00px;top:0;width:321.90px;height:1418px;overflow:hidden;background:none"><div style="left:-149.00px;top:0;width:1445px;height:1418px;background:none"><span class="t" id="t157" style="top:1231.10px;font-size:19.0px;color:#000;left:154.00px;transform-origin:0 0;transform:scaleX(0.9717);">Spring Sale Offer — Dollar vs Percentage</span></div></div>
<span class="t" id="t158" style="top:1231.10px;font-size:19.0px;color:#000;right:840.20px;transform-origin:100% 0;transform:scaleX(1.0187);">0,0%</span>
<span class="t" id="t159" style="top:1231.10px;font-size:19.0px;color:#000;right:701.80px;transform-origin:100% 0;transform:scaleX(1.0187);">0,0%</span>
<span class="t" id="t160" style="top:1231.10px;font-size:19.0px;color:#000;right:540.00px;transform-origin:100% 0;transform:scaleX(1.0187);">0,0%</span>
<span class="t" style="top:1231.10px;font-size:19.0px;color:#000;font-weight:bold;left:-32.50px;width:2000px;text-align:center;transform-origin:50% 0;transform:scaleX(1.0193);"><span id="t161">A</span></span>
<span class="t" id="t162" style="top:1231.10px;font-size:19.0px;color:#000;left:1030.30px;transform-origin:0 0;transform:scaleX(1.0110);">Planned</span>
<span class="t" id="t163" style="top:1288.12px;font-size:19.0px;color:#000;font-weight:bold;left:15.70px;transform-origin:0 0;transform:scaleX(0.9220);">MARKETER TAKEAWAY</span>
<span class="t" id="t164" style="top:1361.50px;font-size:17.6px;color:#000;font-style:italic;left:15.20px;transform-origin:0 0;transform:scaleX(0.9782);">12 tests tracked</span>
<span class="t" id="t165" style="top:1361.50px;font-size:17.6px;color:#000;font-style:italic;left:153.20px;transform-origin:0 0;transform:scaleX(0.9806);">9 completed</span>
<span class="t" id="t166" style="top:1361.50px;font-size:17.6px;color:#000;font-style:italic;left:264.20px;transform-origin:0 0;transform:scaleX(0.9744);">2 running</span>
<span class="t" id="t167" style="top:1361.50px;font-size:17.6px;color:#000;font-style:italic;left:353.20px;transform-origin:0 0;transform:scaleX(0.9551);">1 planned.</span>
<span class="t" id="t168" style="top:1361.50px;font-size:17.6px;color:#000;font-style:italic;left:438.20px;transform-origin:0 0;transform:scaleX(0.9640);">Variant B win rate across completed tests: 67%.</span>
<span class="t" id="t169" style="top:1361.50px;font-size:17.6px;color:#000;font-style:italic;left:801.20px;transform-origin:0 0;transform:scaleX(0.9291);">Avg CVR lift when B wins: +15%.</span>
<span class="t" id="t170" style="top:1361.50px;font-size:17.6px;color:#000;font-style:italic;left:1047.20px;transform-origin:0 0;transform:scaleX(0.9671);">Total sessions tested:</span>
<span class="t" style="top:1361.50px;font-size:17.6px;color:#000;font-style:italic;left:-855.70px;width:2000px;text-align:center;transform-origin:50% 0;"><span id="t171">|</span></span>
<span class="t" style="top:1361.50px;font-size:17.6px;color:#000;font-style:italic;left:-744.40px;width:2000px;text-align:center;transform-origin:50% 0;"><span id="t172">|</span></span>
<span class="t" style="top:1361.50px;font-size:17.6px;color:#000;font-style:italic;left:-655.80px;width:2000px;text-align:center;transform-origin:50% 0;"><span id="t173">|</span></span>
<span class="t" id="t174" style="top:1388.50px;font-size:17.6px;color:#000;font-style:italic;left:15.20px;transform-origin:0 0;transform:scaleX(0.9645);">274350,0.</span>
<div style="left:0.00px;top:271.00px;width:1445.00px;height:40.00px;background:#f2f2f2;"></div>
<div style="left:1278.80px;top:271.00px;width:166.20px;height:40.00px;background:linear-gradient(#f8f8f8,#f4f4f4);"></div>
<div style="left:0.00px;top:264.00px;width:1445.00px;height:8.00px;background:#f4f4f4;"></div>
<div style="left:0.00px;top:265.00px;width:1445.00px;height:2.00px;background:#b4b4b4;"></div>
<svg style="left:0px;top:0px;overflow:visible" width="1" height="1" viewBox="0 0 1 1" ><rect x="0" y="269.4" width="1445" height="1.7" fill="#b6b6b6"/></svg>
<svg style="left:0px;top:0px;overflow:visible" width="1" height="1" viewBox="0 0 1 1" ><rect x="148.3" y="273" width="1.4" height="37" fill="#e4e4e4"/></svg>
<svg style="left:0px;top:0px;overflow:visible" width="1" height="1" viewBox="0 0 1 1" ><rect x="470.7" y="273" width="1.4" height="37" fill="#e4e4e4"/></svg>
<svg style="left:0px;top:0px;overflow:visible" width="1" height="1" viewBox="0 0 1 1" ><rect x="609.0999999999999" y="273" width="1.4" height="37" fill="#e4e4e4"/></svg>
<svg style="left:0px;top:0px;overflow:visible" width="1" height="1" viewBox="0 0 1 1" ><rect x="747.5" y="273" width="1.4" height="37" fill="#e4e4e4"/></svg>
<svg style="left:0px;top:0px;overflow:visible" width="1" height="1" viewBox="0 0 1 1" ><rect x="909.3" y="273" width="1.4" height="37" fill="#e4e4e4"/></svg>
<svg style="left:0px;top:0px;overflow:visible" width="1" height="1" viewBox="0 0 1 1" ><rect x="1024.3" y="273" width="1.4" height="37" fill="#e4e4e4"/></svg>
<svg style="left:0px;top:0px;overflow:visible" width="1" height="1" viewBox="0 0 1 1" ><rect x="1162.8999999999999" y="273" width="1.4" height="37" fill="#e4e4e4"/></svg>
<div style="left:1277.80px;top:273.00px;width:2.00px;height:37.00px;background:#fbfbfb;"></div>
<div style="left:1377.80px;top:273.00px;width:2.00px;height:37.00px;background:#fbfbfb;"></div>
<div style="left:1278.80px;top:311.00px;width:166.20px;height:2.00px;background:#c4c4c4;"></div>
<div style="left:10.50px;top:309.00px;width:1268.30px;height:2.50px;background:#19703f;"></div>
<span class="t" style="top:281.64px;font-size:19.8px;color:#19703f;-webkit-text-stroke:0.35px #19703f;left:-919.25px;width:2000px;text-align:center;transform-origin:50% 0;"><span id="t175">A</span></span>
<span class="t" style="top:281.64px;font-size:19.8px;color:#19703f;-webkit-text-stroke:0.35px #19703f;left:-688.80px;width:2000px;text-align:center;transform-origin:50% 0;"><span id="t176">B</span></span>
<span class="t" style="top:281.64px;font-size:19.8px;color:#19703f;-webkit-text-stroke:0.35px #19703f;left:-458.40px;width:2000px;text-align:center;transform-origin:50% 0;"><span id="t177">C</span></span>
<span class="t" style="top:281.64px;font-size:19.8px;color:#19703f;-webkit-text-stroke:0.35px #19703f;left:-320.00px;width:2000px;text-align:center;transform-origin:50% 0;"><span id="t178">D</span></span>
<span class="t" style="top:281.64px;font-size:19.8px;color:#19703f;-webkit-text-stroke:0.35px #19703f;left:-169.90px;width:2000px;text-align:center;transform-origin:50% 0;"><span id="t179">E</span></span>
<span class="t" style="top:281.64px;font-size:19.8px;color:#19703f;-webkit-text-stroke:0.35px #19703f;left:-31.50px;width:2000px;text-align:center;transform-origin:50% 0;"><span id="t180">F</span></span>
<span class="t" style="top:281.64px;font-size:19.8px;color:#19703f;-webkit-text-stroke:0.35px #19703f;left:95.30px;width:2000px;text-align:center;transform-origin:50% 0;"><span id="t181">G</span></span>
<span class="t" style="top:281.64px;font-size:19.8px;color:#19703f;-webkit-text-stroke:0.35px #19703f;left:222.20px;width:2000px;text-align:center;transform-origin:50% 0;"><span id="t182">H</span></span>
<span class="t" style="top:281.64px;font-size:19.8px;color:#444;-webkit-text-stroke:0.2px #444;left:329.30px;width:2000px;text-align:center;transform-origin:50% 0;"><span id="t183">I</span></span>
<span class="t" id="t184" style="top:281.64px;font-size:19.8px;color:#444;-webkit-text-stroke:0.2px #444;left:1425.20px;transform-origin:0 0;transform:scaleX(0.7785);">J</span>
<div style="left:0.00px;top:271.00px;width:11.00px;height:1147.00px;background:#f5f5f5;"></div>
<div style="left:0.00px;top:311.50px;width:10.00px;height:41.50px;background:#ebebeb;"></div>
<svg style="left:0px;top:0px;overflow:visible" width="1" height="1" viewBox="0 0 1 1" ><rect x="10.3" y="271" width="1.3" height="1147" fill="#b4b4b4"/></svg>
<div style="left:0.00px;top:352.00px;width:10.00px;height:2.00px;background:#dedede;"></div>
<div style="left:0.00px;top:377.00px;width:10.00px;height:2.00px;background:#dedede;"></div>
<div style="left:0.00px;top:405.30px;width:10.00px;height:2.00px;background:#dedede;"></div>
<div style="left:0.00px;top:434.00px;width:10.00px;height:2.00px;background:#dedede;"></div>
<div style="left:0.00px;top:462.50px;width:10.00px;height:2.00px;background:#dedede;"></div>
<div style="left:0.00px;top:515.00px;width:10.00px;height:2.00px;background:#dedede;"></div>
<div style="left:0.00px;top:543.60px;width:10.00px;height:2.00px;background:#dedede;"></div>
<div style="left:0.00px;top:572.30px;width:10.00px;height:2.00px;background:#dedede;"></div>
<div style="left:0.00px;top:624.00px;width:10.00px;height:2.00px;background:#dedede;"></div>
<div style="left:0.00px;top:652.85px;width:10.00px;height:2.00px;background:#dedede;"></div>
<div style="left:0.00px;top:681.70px;width:10.00px;height:2.00px;background:#dedede;"></div>
<div style="left:0.00px;top:710.55px;width:10.00px;height:2.00px;background:#dedede;"></div>
<div style="left:0.00px;top:739.40px;width:10.00px;height:2.00px;background:#dedede;"></div>
<div style="left:0.00px;top:768.25px;width:10.00px;height:2.00px;background:#dedede;"></div>
<div style="left:0.00px;top:797.10px;width:10.00px;height:2.00px;background:#dedede;"></div>
<div style="left:0.00px;top:826.20px;width:10.00px;height:2.00px;background:#dedede;"></div>
<div style="left:0.00px;top:855.00px;width:10.00px;height:2.00px;background:#dedede;"></div>
<div style="left:0.00px;top:907.00px;width:10.00px;height:2.00px;background:#dedede;"></div>
<div style="left:0.00px;top:935.84px;width:10.00px;height:2.00px;background:#dedede;"></div>
<div style="left:0.00px;top:964.68px;width:10.00px;height:2.00px;background:#dedede;"></div>
<div style="left:0.00px;top:993.52px;width:10.00px;height:2.00px;background:#dedede;"></div>
<div style="left:0.00px;top:1022.36px;width:10.00px;height:2.00px;background:#dedede;"></div>
<div style="left:0.00px;top:1051.20px;width:10.00px;height:2.00px;background:#dedede;"></div>
<div style="left:0.00px;top:1080.04px;width:10.00px;height:2.00px;background:#dedede;"></div>
<div style="left:0.00px;top:1108.88px;width:10.00px;height:2.00px;background:#dedede;"></div>
<div style="left:0.00px;top:1137.72px;width:10.00px;height:2.00px;background:#dedede;"></div>
<div style="left:0.00px;top:1166.56px;width:10.00px;height:2.00px;background:#dedede;"></div>
<div style="left:0.00px;top:1195.40px;width:10.00px;height:2.00px;background:#dedede;"></div>
<div style="left:0.00px;top:1224.24px;width:10.00px;height:2.00px;background:#dedede;"></div>
<div style="left:0.00px;top:1253.08px;width:10.00px;height:2.00px;background:#dedede;"></div>
<div style="left:0.00px;top:1281.80px;width:10.00px;height:2.00px;background:#dedede;"></div>
<div style="left:0.00px;top:1310.60px;width:10.00px;height:2.00px;background:#dedede;"></div>
<div style="left:0.00px;top:1409.00px;width:10.00px;height:2.00px;background:#dedede;"></div>
<div style="left:0.00px;top:1439.00px;width:10.00px;height:2.00px;background:#dedede;"></div>
<svg style="left:0;top:271px" width="10" height="40"><path d="M-4 33 L6 10 L6 33 Z" fill="#dcdcdc"/></svg>
<svg style="left:0px;top:0px;overflow:visible" width="1" height="1" viewBox="0 0 1 1" ><rect x="10" y="311.5" width="1270" height="42.0" fill="none" stroke="#19703f" stroke-width="4"/><rect x="12.9" y="314.4" width="1264.2" height="36.2" fill="none" stroke="#fff" stroke-width="1.8"/></svg>
<div style="left:1271.70px;top:345.80px;width:12.30px;height:12.30px;background:#fff;"></div>
<div style="left:1274.00px;top:348.00px;width:9.60px;height:8.90px;background:#19703f;"></div>
<div style="left:0.00px;top:0.00px;width:1445.00px;height:264.00px;background:#f4f4f4;"></div>
<span class="t" id="t185" style="top:30.28px;font-size:24.6px;color:#222;font-weight:bold;right:1383.70px;transform-origin:100% 0;transform:scaleX(1.0828);">Home</span>
<span class="t" id="t186" style="top:30.28px;font-size:24.6px;color:#262626;-webkit-text-stroke:0.65px #262626;left:105.50px;transform-origin:0 0;transform:scaleX(1.1135);">Insert</span>
<span class="t" id="t187" style="top:30.28px;font-size:24.6px;color:#262626;-webkit-text-stroke:0.65px #262626;left:222.50px;transform-origin:0 0;transform:scaleX(1.0716);">Draw</span>
<span class="t" id="t188" style="top:30.28px;font-size:24.6px;color:#262626;-webkit-text-stroke:0.65px #262626;left:331.00px;transform-origin:0 0;transform:scaleX(1.0570);">Page Layout</span>
<span class="t" id="t189" style="top:30.28px;font-size:24.6px;color:#262626;-webkit-text-stroke:0.65px #262626;left:527.00px;transform-origin:0 0;transform:scaleX(1.0683);">Formulas</span>
<span class="t" id="t190" style="top:30.28px;font-size:24.6px;color:#262626;-webkit-text-stroke:0.65px #262626;left:685.50px;transform-origin:0 0;transform:scaleX(1.0683);">Data</span>
<span class="t" id="t191" style="top:30.28px;font-size:24.6px;color:#262626;-webkit-text-stroke:0.65px #262626;left:786.00px;transform-origin:0 0;transform:scaleX(1.0541);">Review</span>
<span class="t" id="t192" style="top:30.28px;font-size:24.6px;color:#262626;-webkit-text-stroke:0.65px #262626;left:917.00px;transform-origin:0 0;transform:scaleX(1.0969);">View</span>
<span class="t" id="t193" style="top:30.28px;font-size:24.6px;color:#262626;-webkit-text-stroke:0.65px #262626;left:1022.50px;transform-origin:0 0;transform:scaleX(1.0923);">Automate</span>
<span class="t" id="t194" style="top:30.28px;font-size:24.6px;color:#262626;-webkit-text-stroke:0.65px #262626;left:1186.00px;transform-origin:0 0;transform:scaleX(1.1030);">Acrobat</span>
<div style="left:-6.00px;top:62.00px;width:67.50px;height:5.00px;background:#19703f;border-radius:3px"></div>
<div style="left:167.20px;top:88.00px;width:1.60px;height:119.00px;background:#cbcbcb;"></div>
<div style="left:686.00px;top:88.00px;width:1.60px;height:119.00px;background:#cbcbcb;"></div>
<div style="left:1003.10px;top:79.00px;width:1.60px;height:119.00px;background:#cbcbcb;"></div>
<div style="left:1109.20px;top:88.00px;width:1.60px;height:119.00px;background:#cbcbcb;"></div>
<div style="left:372.90px;top:155.50px;width:1.60px;height:34.50px;background:#d0d0d0;"></div>
<div style="left:474.80px;top:155.50px;width:1.60px;height:34.50px;background:#d0d0d0;"></div>
<div style="left:868.70px;top:94.00px;width:1.60px;height:34.70px;background:#d0d0d0;"></div>
<div style="left:970.40px;top:94.00px;width:1.60px;height:34.70px;background:#d0d0d0;"></div>
<div style="left:868.70px;top:155.30px;width:1.60px;height:34.70px;background:#d0d0d0;"></div>
<div style="left:1314.20px;top:156.00px;width:1.60px;height:33.50px;background:#d0d0d0;"></div>
<svg style="left:0px;top:0px;overflow:visible" width="1" height="1" viewBox="0 0 1 1" >
<rect x="1.3" y="97.4" width="37.5" height="43.4" fill="#fbdc9b" stroke="#ee7f2f" stroke-width="2.6"/>
<rect x="5.8" y="103" width="28" height="33.5" fill="#f7f7f7"/>
<path d="M9.2 102.4 V96 H13.9 C13.9 86.4 26.8 86.4 26.8 96 H31.9 V102.4 Z" fill="#f4f4f4" stroke="#777" stroke-width="2.2" stroke-linejoin="round"/>
<rect x="25.6" y="111.6" width="25.6" height="33.6" fill="#f9f9f9" stroke="#f3f3f3" stroke-width="5"/>
<rect x="25.9" y="112" width="25.2" height="33" fill="#f9f9f9" stroke="#333" stroke-width="2.2"/>
</svg>
<svg style="left:0px;top:0px;overflow:visible" width="1" height="1" viewBox="0 0 1 1" ><path d="M62.199999999999996 113.5 L67.25 119.0 L72.3 113.5" fill="none" stroke="#333" stroke-width="2.6" stroke-linecap="round" stroke-linejoin="miter"/></svg>
<span class="t" id="t195" style="top:157.48px;font-size:19.4px;color:#111;-webkit-text-stroke:0.3px #111;left:5.80px;transform-origin:0 0;transform:scaleX(1.0687);">Paste</span>
<svg style="left:0px;top:0px;overflow:visible" width="1" height="1" viewBox="0 0 1 1" >
<path d="M98.6 85.5 L108.6 107.6 M109 85.5 L99 107.6" stroke="#333" stroke-width="1.7" fill="none" stroke-linecap="round"/>
<circle cx="98" cy="111.3" r="2.9" fill="none" stroke="#1e88d8" stroke-width="2.3"/>
<circle cx="109.5" cy="111.3" r="2.9" fill="none" stroke="#1e88d8" stroke-width="2.3"/>
</svg>
<svg style="left:0px;top:0px;overflow:visible" width="1" height="1" viewBox="0 0 1 1" >
<path d="M98.5 152.2 H89.4 V128.3 H99.5 L102.6 131.2" fill="none" stroke="#333" stroke-width="2"/>
<path d="M101.5 134.3 H111.5 L117.6 140.5 V155.9 H101.5 Z" fill="#f8f8f8" stroke="#333" stroke-width="2" stroke-linejoin="miter"/>
<path d="M111.2 134.6 V141 H117.4" fill="none" stroke="#333" stroke-width="1.8"/>
<path d="M105.6 147.2 H113 M105.6 151.2 H113" stroke="#666" stroke-width="1.6"/>
</svg>
<svg style="left:0px;top:0px;overflow:visible" width="1" height="1" viewBox="0 0 1 1" ><path d="M131.70000000000002 140.5 L136.60000000000002 146.0 L141.5 140.5" fill="none" stroke="#333" stroke-width="2.6" stroke-linecap="round" stroke-linejoin="miter"/></svg>
<svg style="left:0px;top:0px;overflow:visible" width="1" height="1" viewBox="0 0 1 1" >
<path d="M90 182.6 L100.5 177.2 L111 187.3 L101.8 196.8 Z" fill="#fbdc9b" stroke="#ee7f2f" stroke-width="2" stroke-linejoin="round"/>
<path d="M92.5 183 L100.4 178.6 L107.8 186 L96.6 189.5 Z" fill="#f7f7f7"/>
<path d="M101.3 176.3 L105 172.8 L115.6 183.4 L112 187.2 Z" fill="#f6f6f6" stroke="#333" stroke-width="1.8" stroke-linejoin="round"/>
<path d="M108.3 176.3 L115.8 169.6 L118.8 172.4 L112.2 179.8" fill="#f6f6f6" stroke="#333" stroke-width="1.8" stroke-linejoin="round"/>
</svg>
<div style="left:188.4px;top:88.4px;width:270.20000000000005px;height:45.599999999999994px;background:#fff;box-sizing:border-box;border:1px solid #c0c0c0;border-radius:6.5px;box-shadow:0 0 0 0.6px #dcdcdc"></div>
<span class="t" id="t196" style="top:99.05px;font-size:23.8px;color:#111;left:199.60px;transform-origin:0 0;transform:scaleX(1.0229);">Calibri</span>
<svg style="left:0px;top:0px;overflow:visible" width="1" height="1" viewBox="0 0 1 1" ><path d="M439.9 109.5 L444.8 115.0 L449.70000000000005 109.5" fill="none" stroke="#333" stroke-width="2.6" stroke-linecap="round" stroke-linejoin="miter"/></svg>
<div style="left:463.4px;top:88.4px;width:103.20000000000005px;height:45.599999999999994px;background:#fff;box-sizing:border-box;border:1px solid #c0c0c0;border-radius:6.5px;box-shadow:0 0 0 0.6px #dcdcdc"></div>
<span class="t" id="t197" style="top:99.05px;font-size:23.8px;color:#111;left:474.00px;transform-origin:0 0;transform:scaleX(0.9251);">12</span>
<svg style="left:0px;top:0px;overflow:visible" width="1" height="1" viewBox="0 0 1 1" ><path d="M547.6 109.80000000000001 L552.55 115.3 L557.5 109.80000000000001" fill="none" stroke="#333" stroke-width="2.6" stroke-linecap="round" stroke-linejoin="miter"/></svg>
<svg style="left:0px;top:0px;overflow:visible" width="1" height="1" viewBox="0 0 1 1" >
<path d="M581.6 120.6 L590.8 97 L600 120.6 M584.9 112.6 H596.7" fill="none" stroke="#444" stroke-width="2.1" stroke-linejoin="miter"/>
<path d="M600 103.2 L604.3 99.3 L608.6 103.2" fill="none" stroke="#1e88d8" stroke-width="2" stroke-linecap="round"/>
<path d="M634.2 120.6 L641.7 102.6 L649.2 120.6 M637 114 H646.4" fill="none" stroke="#444" stroke-width="2.1"/>
<path d="M650.2 99.2 L654.4 103 L658.6 99.2" fill="none" stroke="#1e88d8" stroke-width="2" stroke-linecap="round"/>
</svg>
<div style="left:188.3px;top:150px;width:46.099999999999994px;height:45.69999999999999px;background:linear-gradient(#cacaca,#bcbcbc);border-radius:6px"></div>
<span class="t" style="top:159.28px;font-size:24px;color:#3a3a3a;font-weight:bold;left:-788.40px;width:2000px;text-align:center;transform-origin:50% 0;transform:scaleX(0.8822);"><span id="t198">B</span></span>
<svg style="left:0px;top:0px;overflow:visible" width="1" height="1" viewBox="0 0 1 1" >
<path d="M264.6 163.2 L258.6 178.8 M259.8 163.2 H267.4 M255.4 178.8 H263" stroke="#333" stroke-width="1.9" fill="none"/>
<path d="M303.3 162.3 V172.4 A7 6.6 0 0 0 317.5 172.4 V162.3" stroke="#333" stroke-width="2" fill="none"/>
<path d="M301.8 183.2 H319" stroke="#333" stroke-width="2" fill="none"/>
</svg>
<svg style="left:0px;top:0px;overflow:visible" width="1" height="1" viewBox="0 0 1 1" ><path d="M340.9 170.70000000000002 L346.0 176.4 L351.1 170.70000000000002" fill="none" stroke="#333" stroke-width="2.6" stroke-linecap="round" stroke-linejoin="miter"/></svg>
<svg style="left:0px;top:0px;overflow:visible" width="1" height="1" viewBox="0 0 1 1" >
<path d="M398 159.6 H427 M398 171.6 H427" stroke="#333" stroke-width="1.9" stroke-dasharray="1.9 1.68" fill="none"/>
<path d="M399 162.2 V182.6 M426 162.2 V182.6 M412.5 162.2 V170 M412.5 173.4 V182.6" stroke="#333" stroke-width="1.9" stroke-dasharray="1.9 1.68" fill="none"/>
<path d="M398 185 H427" stroke="#222" stroke-width="2.2"/>
</svg>
<svg style="left:0px;top:0px;overflow:visible" width="1" height="1" viewBox="0 0 1 1" ><path d="M442.9 170.70000000000002 L447.85 176.4 L452.8 170.70000000000002" fill="none" stroke="#333" stroke-width="2.6" stroke-linecap="round" stroke-linejoin="miter"/></svg>
<svg style="left:0px;top:0px;overflow:visible" width="1" height="1" viewBox="0 0 1 1" >
<path d="M505.3 170.2 L514.6 161.2 L523.4 170.2 L513.2 179 Z" fill="#f8f8f8" stroke="#333" stroke-width="1.9" stroke-linejoin="round"/>
<path d="M513.4 164.5 V160.3 A2.3 2.3 0 0 1 518 160.3 V166.3" fill="none" stroke="#333" stroke-width="1.7"/>
<path d="M522 165.2 C526.2 166 527.3 171.5 526.6 176.2 C525.6 172.6 524.6 170.4 522.2 169 Z" fill="#1e88d8" stroke="#1a73c4" stroke-width="1"/>
<rect x="500" y="180.8" width="30.3" height="7.2" fill="#d5d5d5"/>
</svg>
<svg style="left:0px;top:0px;overflow:visible" width="1" height="1" viewBox="0 0 1 1" ><path d="M544.5 171.1 L549.5 176.60000000000002 L554.5 171.1" fill="none" stroke="#333" stroke-width="2.6" stroke-linecap="round" stroke-linejoin="miter"/></svg>
<svg style="left:0px;top:0px;overflow:visible" width="1" height="1" viewBox="0 0 1 1" >
<path d="M580.2 178.4 L588.4 158.8 L596.6 178.4 M583.2 171.4 H593.6" fill="none" stroke="#444" stroke-width="2"/>
<rect x="572.6" y="180.8" width="30.8" height="7.2" fill="#000"/>
</svg>
<svg style="left:0px;top:0px;overflow:visible" width="1" height="1" viewBox="0 0 1 1" ><path d="M617.6999999999999 171.1 L622.65 176.60000000000002 L627.6 171.1" fill="none" stroke="#333" stroke-width="2.6" stroke-linecap="round" stroke-linejoin="miter"/></svg>
<svg style="left:0px;top:0px;overflow:visible" width="1" height="1" viewBox="0 0 1 1" ><path d="M716.7 97 H743.7 M720.7 104.8 H740 M716.7 112.2 H743.7" stroke="#333" stroke-width="2.1" fill="none"/></svg>
<svg style="left:0px;top:0px;overflow:visible" width="1" height="1" viewBox="0 0 1 1" ><path d="M766.5 102.8 H793.5 M770.5 110.5 H790 M766.5 118 H793.5" stroke="#333" stroke-width="2.1" fill="none"/></svg>
<div style="left:807.3px;top:88.3px;width:45.60000000000002px;height:45.89999999999999px;background:linear-gradient(#cacaca,#bcbcbc);border-radius:6px"></div>
<svg style="left:0px;top:0px;overflow:visible" width="1" height="1" viewBox="0 0 1 1" ><path d="M816.8 110.3 H843.4 M820.6 118 H839.8 M816.8 125.8 H843.4" stroke="#333" stroke-width="2.1" fill="none"/></svg>
<svg style="left:0px;top:0px;overflow:visible" width="1" height="1" viewBox="0 0 1 1" ><path d="M716.7 160.4 H743.7 M716.7 168 H736 M716.7 175.7 H743.7 M716.7 183.5 H736" stroke="#333" stroke-width="2.1" fill="none"/></svg>
<div style="left:757px;top:149.8px;width:46px;height:46.0px;background:linear-gradient(#cacaca,#bcbcbc);border-radius:6px"></div>
<svg style="left:0px;top:0px;overflow:visible" width="1" height="1" viewBox="0 0 1 1" ><path d="M766.5 160.4 H793.5 M770.5 168 H790 M766.5 175.7 H793.5 M770.5 183.5 H790" stroke="#333" stroke-width="2.1" fill="none"/></svg>
<svg style="left:0px;top:0px;overflow:visible" width="1" height="1" viewBox="0 0 1 1" ><path d="M816.8 160.4 H843.4 M824.5 168 H843.4 M816.8 175.7 H843.4 M824.5 183.5 H843.4" stroke="#333" stroke-width="2.1" fill="none"/></svg>
<svg style="left:0px;top:0px;overflow:visible" width="1" height="1" viewBox="0 0 1 1" >
<text transform="translate(898.8 121) rotate(-45)" font-family="Liberation Sans" font-size="20.5" fill="#333">ab</text>
<path d="M903.8 124.2 L923.6 104.8 M915.6 104.4 H924 V112.6" fill="none" stroke="#1e88d8" stroke-width="1.8"/>
</svg>
<svg style="left:0px;top:0px;overflow:visible" width="1" height="1" viewBox="0 0 1 1" ><path d="M938.4 109.10000000000001 L943.55 114.8 L948.7 109.10000000000001" fill="none" stroke="#333" stroke-width="2.6" stroke-linecap="round" stroke-linejoin="miter"/></svg>
<svg style="left:0px;top:0px;overflow:visible" width="1" height="1" viewBox="0 0 1 1" ><path d="M895.4 160.4 H922.4 M911.2 168 H922.4 M911.2 175.7 H922.4 M895.4 183.5 H922.4" stroke="#333" stroke-width="2.1" fill="none"/></svg>
<svg style="left:0px;top:0px;overflow:visible" width="1" height="1" viewBox="0 0 1 1" ><path d="M907.2 171.9 H896.4 M900.8 167.2 L896.2 171.9 L900.8 176.6" fill="none" stroke="#1e88d8" stroke-width="1.9"/></svg>
<svg style="left:0px;top:0px;overflow:visible" width="1" height="1" viewBox="0 0 1 1" ><path d="M945.2 160.4 H972.3 M961 168 H972.3 M961 175.7 H972.3 M945.2 183.5 H972.3" stroke="#333" stroke-width="2.1" fill="none"/></svg>
<svg style="left:0px;top:0px;overflow:visible" width="1" height="1" viewBox="0 0 1 1" ><path d="M945.6 171.9 H956.6 M952 167.2 L956.8 171.9 L952 176.6" fill="none" stroke="#1e88d8" stroke-width="1.9"/></svg>
<svg style="left:0px;top:0px;overflow:visible" width="1" height="1" viewBox="0 0 1 1" >
<text x="1032" y="109.8" font-family="Liberation Sans" font-size="18.2" fill="#444" textLength="23" lengthAdjust="spacingAndGlyphs">ab</text>
<text x="1032" y="124.3" font-family="Liberation Sans" font-size="18.2" fill="#444" textLength="9.6" lengthAdjust="spacingAndGlyphs">c</text>
<path d="M1056.6 111.4 C1060.2 114.6 1057.6 120.6 1051.6 120.6 H1045 M1050.6 115.4 L1044.6 120.6 L1050.6 125.8" fill="none" stroke="#1e88d8" stroke-width="1.9"/>
</svg>
<svg style="left:0px;top:0px;overflow:visible" width="1" height="1" viewBox="0 0 1 1" ><path d="M1072.9 109.30000000000001 L1078.0 115.2 L1083.1 109.30000000000001" fill="none" stroke="#333" stroke-width="2.6" stroke-linecap="round" stroke-linejoin="miter"/></svg>
<div style="left:1020.2px;top:149.8px;width:69.2px;height:46px;border-radius:6px;background:#dedede;overflow:hidden"><div style="left:0;top:0;width:46.3px;height:46px;background:linear-gradient(#c8c8c8,#bdbdbd)"></div></div>
<svg style="left:0px;top:0px;overflow:visible" width="1" height="1" viewBox="0 0 1 1" >
<rect x="1029.4" y="159" width="26.2" height="25.8" fill="#f4f4f4" stroke="#333" stroke-width="2"/>
<path d="M1042.5 159 V164.4 M1042.5 178.8 V184.8" stroke="#333" stroke-width="1.8" fill="none"/>
<rect x="1029.4" y="164.4" width="26.2" height="14.4" fill="#f2f8fd" stroke="#1e88d8" stroke-width="2"/>
<path d="M1033 171.7 H1052 M1037.4 167.4 L1032.8 171.7 L1037.4 176 M1047.6 167.4 L1052.2 171.7 L1047.6 176" fill="none" stroke="#1e88d8" stroke-width="1.8"/>
</svg>
<svg style="left:0px;top:0px;overflow:visible" width="1" height="1" viewBox="0 0 1 1" ><path d="M1072.9 170.5 L1078.0 176.20000000000002 L1083.1 170.5" fill="none" stroke="#333" stroke-width="2.6" stroke-linecap="round" stroke-linejoin="miter"/></svg>
<div style="left:1130.6px;top:88.4px;width:297.0px;height:45.599999999999994px;background:#fff;box-sizing:border-box;border:1px solid #c0c0c0;border-radius:6.5px;box-shadow:0 0 0 0.6px #dcdcdc"></div>
<span class="t" id="t199" style="top:99.05px;font-size:23.8px;color:#111;left:1141.00px;transform-origin:0 0;transform:scaleX(0.9862);">General</span>
<svg style="left:0px;top:0px;overflow:visible" width="1" height="1" viewBox="0 0 1 1" ><path d="M1407.9 109.5 L1413.0 115.0 L1418.1 109.5" fill="none" stroke="#333" stroke-width="2.6" stroke-linecap="round" stroke-linejoin="miter"/></svg>
<svg style="left:0px;top:0px;overflow:visible" width="1" height="1" viewBox="0 0 1 1" >
<rect x="1138.6" y="164" width="27.8" height="17.2" fill="#f6f6f6" stroke="#333" stroke-width="2"/>
<path d="M1147.4 168.6 H1143.4 V176.8 H1147.4 M1157 168.6 H1153 V176.8 M1153 172.7 H1156 M1162 168.6 H1160" fill="none" stroke="#333" stroke-width="1.7"/>
<rect x="1152" y="172" width="18" height="16.5" fill="#f3f3f3"/>
<path d="M1154.4 176 V184.4 A6.6 2.6 0 0 0 1167.6 184.4 V176" fill="#fbe3c0" stroke="#ee7f2f" stroke-width="1.8"/>
<ellipse cx="1161" cy="176" rx="6.6" ry="2.6" fill="#fbe3c0" stroke="#ee7f2f" stroke-width="1.8"/>
<path d="M1154.4 180.2 A6.6 2.6 0 0 0 1167.6 180.2" fill="none" stroke="#ee7f2f" stroke-width="1.8"/>
</svg>
<svg style="left:0px;top:0px;overflow:visible" width="1" height="1" viewBox="0 0 1 1" ><path d="M1182.5 170.5 L1187.4 176.20000000000002 L1192.3 170.5" fill="none" stroke="#333" stroke-width="2.6" stroke-linecap="round" stroke-linejoin="miter"/></svg>
<svg style="left:0px;top:0px;overflow:visible" width="1" height="1" viewBox="0 0 1 1" >
<circle cx="1218.6" cy="166" r="5.5" fill="none" stroke="#333" stroke-width="2"/>
<circle cx="1233.4" cy="179.6" r="5.5" fill="none" stroke="#333" stroke-width="2"/>
<path d="M1233.8 159.6 L1218 186.2" stroke="#333" stroke-width="2" fill="none"/>
<path d="M1275.6 160.6 A5.2 5.2 0 1 0 1277.2 170.6 C1277.4 176.6 1274.6 180.8 1270 183.6 L1270.8 185 C1278.4 182 1283.6 176 1283.6 168.6 C1283.6 163.6 1280.2 160.6 1275.6 160.6 Z" fill="#333"/>
</svg>
<svg style="left:0px;top:0px;overflow:visible" width="1" height="1" viewBox="0 0 1 1" >
<text x="1353.6" y="170.6" font-family="Liberation Sans" font-size="17.6" fill="#333" textLength="15" lengthAdjust="spacingAndGlyphs">.0</text>
<text x="1344.4" y="186.2" font-family="Liberation Sans" font-size="17.6" fill="#333" textLength="24.2" lengthAdjust="spacingAndGlyphs">.00</text>
<path d="M1356 166 H1340.2 M1345.6 160.8 L1340 166 L1345.6 171.2" fill="none" stroke="#1e88d8" stroke-width="1.9"/>
<text x="1394.2" y="170.6" font-family="Liberation Sans" font-size="17.6" fill="#333" textLength="24.2" lengthAdjust="spacingAndGlyphs">.00</text>
<text x="1403.4" y="186.2" font-family="Liberation Sans" font-size="17.6" fill="#333" textLength="15" lengthAdjust="spacingAndGlyphs">.0</text>
<path d="M1389.4 181.4 H1405.6 M1400 176.2 L1405.8 181.4 L1400 186.6" fill="none" stroke="#1e88d8" stroke-width="1.9"/>
</svg>
<div style="left:0.00px;top:213.50px;width:1445.00px;height:2.00px;background:#d6d6d6;"></div>
<div style="left:0.00px;top:215.50px;width:1445.00px;height:49.00px;background:#fff;"></div>
<div style="left:128.80px;top:216.30px;width:1.60px;height:48.00px;background:#d0d0d0;"></div>
<span class="t" id="t200" style="top:228.18px;font-size:24.6px;color:#222;-webkit-text-stroke:0.3px #222;right:1431.00px;transform-origin:100% 0;transform:scaleX(1.0135);">A1</span>
<svg style="left:0px;top:0px;overflow:visible" width="1" height="1" viewBox="0 0 1 1" >
<path d="M114.8 233.6 L121.2 223.6 L127.6 233.6 Z M114.8 245 L121.2 255.2 L127.6 245 Z" fill="#6e6e6e"/>
<path d="M160.6 234 L179.6 252.6 M179.6 234 L160.6 252.6" stroke="#cacaca" stroke-width="4.4" fill="none"/>
<path d="M214.8 244 L222.4 251 L239 234" stroke="#cacaca" stroke-width="4.4" fill="none"/>
<path d="M297.4 240.2 L302.8 245.8 L308.2 240.2" stroke="#c6c6c6" stroke-width="2" fill="none"/>
</svg>
<span class="t" id="t201" style="top:224.62px;font-size:31px;color:#505050;font-style:italic;font-family:'Liberation Serif',serif;-webkit-text-stroke:0.5px #505050;left:257.20px;transform-origin:0 0;transform:scaleX(1.2737);">fx</span>
<div style="left:314.6px;top:222.6px;width:1140px;height:35px;background:#fff;border:1.4px solid #dcdcdc;border-radius:5px"></div>
<span class="t" id="t202" style="top:228.78px;font-size:24.6px;color:#111;-webkit-text-stroke:0.3px #111;left:328.40px;transform-origin:0 0;transform:scaleX(0.9453);">Landing Page &amp; Creative</span>
<span class="t" id="t203" style="top:228.78px;font-size:24.6px;color:#111;-webkit-text-stroke:0.3px #111;left:591.80px;transform-origin:0 0;transform:scaleX(0.9474);">Testing Tracker</span>
<span class="t" id="t204" style="top:228.78px;font-size:24.6px;color:#111;-webkit-text-stroke:0.3px #111;left:756.60px;transform-origin:0 0;transform:scaleX(0.9704);">v3.0 — Dashboard</span>
<span class="t" style="top:228.78px;font-size:24.6px;color:#111;left:-27.00px;width:2000px;text-align:center;transform-origin:50% 0;"><span id="t205">|</span></span>
<span class="t" id="t206" style="top:228.78px;font-size:24.6px;color:#111;-webkit-text-stroke:0.3px #111;left:992.20px;transform-origin:0 0;transform:scaleX(0.9743);">Decision Kits</span>
</div></body></html>
